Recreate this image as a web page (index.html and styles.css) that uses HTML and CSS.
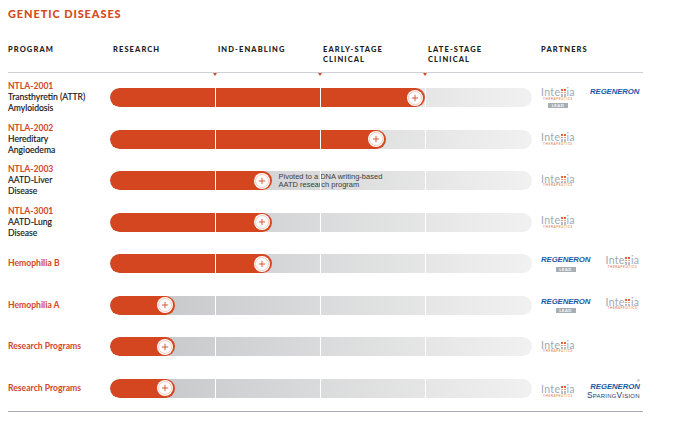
FILE: index.html
```html
<!DOCTYPE html>
<html lang="en">
<head>
<meta charset="utf-8">
<title>Genetic Diseases</title>
<link rel="stylesheet" href="styles.css">
</head>
<body>
<div class="page">
  <h1 class="title">GENETIC DISEASES</h1>
  <div class="head">
    <div class="hcell">PROGRAM</div>
    <div class="hcell stage">RESEARCH</div>
    <div class="hcell stage mark">IND-ENABLING</div>
    <div class="hcell stage mark">EARLY-STAGE<br>CLINICAL</div>
    <div class="hcell stage mark">LATE-STAGE<br>CLINICAL</div>
    <div class="hcell partners-h">PARTNERS</div>
  </div>
  <div class="rows">
    <div class="row">
      <div class="label"><span class="code">NTLA-2001</span><span>Transthyretin (ATTR)</span><span>Amyloidosis</span></div>
      <div class="bar"><div class="fill" style="width:314.5px"><svg class="plus" viewBox="0 0 16 16"><circle cx="8" cy="8" r="8" fill="#fff"/><circle cx="8" cy="8" r="6.5" fill="none" stroke="#e08a6c" stroke-width=".45"/><path d="M8 4.8v6.4M4.8 8h6.4" stroke="#d44a22" stroke-width=".9"/></svg></div></div>
      <div class="partners">
        <div class="group">
          <div class="intellia"><div class="int-word">Inte<span class="ll"><i></i><i></i></span>ia</div><div class="int-sub">THERAPEUTICS</div></div>
          <div class="lead">LEAD</div>
        </div>
        <div class="regen">REGENERON</div>
      </div>
    </div>
    <div class="row">
      <div class="label"><span class="code">NTLA-2002</span><span>Hereditary</span><span>Angioedema</span></div>
      <div class="bar"><div class="fill" style="width:275.5px"><svg class="plus" viewBox="0 0 16 16"><circle cx="8" cy="8" r="8" fill="#fff"/><circle cx="8" cy="8" r="6.5" fill="none" stroke="#e08a6c" stroke-width=".45"/><path d="M8 4.8v6.4M4.8 8h6.4" stroke="#d44a22" stroke-width=".9"/></svg></div></div>
      <div class="partners">
        <div class="intellia"><div class="int-word">Inte<span class="ll"><i></i><i></i></span>ia</div><div class="int-sub">THERAPEUTICS</div></div>
      </div>
    </div>
    <div class="row">
      <div class="label"><span class="code">NTLA-2003</span><span>AATD-Liver</span><span>Disease</span></div>
      <div class="bar"><div class="fill" style="width:161.5px"><svg class="plus" viewBox="0 0 16 16"><circle cx="8" cy="8" r="8" fill="#fff"/><circle cx="8" cy="8" r="6.5" fill="none" stroke="#e08a6c" stroke-width=".45"/><path d="M8 4.8v6.4M4.8 8h6.4" stroke="#d44a22" stroke-width=".9"/></svg></div><div class="note">Pivoted to a DNA writing-based<br>AATD research program</div></div>
      <div class="partners">
        <div class="intellia"><div class="int-word">Inte<span class="ll"><i></i><i></i></span>ia</div><div class="int-sub">THERAPEUTICS</div></div>
      </div>
    </div>
    <div class="row">
      <div class="label"><span class="code">NTLA-3001</span><span>AATD-Lung</span><span>Disease</span></div>
      <div class="bar"><div class="fill" style="width:161.5px"><svg class="plus" viewBox="0 0 16 16"><circle cx="8" cy="8" r="8" fill="#fff"/><circle cx="8" cy="8" r="6.5" fill="none" stroke="#e08a6c" stroke-width=".45"/><path d="M8 4.8v6.4M4.8 8h6.4" stroke="#d44a22" stroke-width=".9"/></svg></div></div>
      <div class="partners">
        <div class="intellia"><div class="int-word">Inte<span class="ll"><i></i><i></i></span>ia</div><div class="int-sub">THERAPEUTICS</div></div>
      </div>
    </div>
    <div class="row">
      <div class="label"><span class="code">Hemophilia B</span></div>
      <div class="bar"><div class="fill" style="width:161.5px"><svg class="plus" viewBox="0 0 16 16"><circle cx="8" cy="8" r="8" fill="#fff"/><circle cx="8" cy="8" r="6.5" fill="none" stroke="#e08a6c" stroke-width=".45"/><path d="M8 4.8v6.4M4.8 8h6.4" stroke="#d44a22" stroke-width=".9"/></svg></div></div>
      <div class="partners">
        <div class="group">
          <div class="regen">REGENERON</div>
          <div class="lead">LEAD</div>
        </div>
        <div class="intellia"><div class="int-word">Inte<span class="ll"><i></i><i></i></span>ia</div><div class="int-sub">THERAPEUTICS</div></div>
      </div>
    </div>
    <div class="row">
      <div class="label"><span class="code">Hemophilia A</span></div>
      <div class="bar"><div class="fill" style="width:64.5px"><svg class="plus" viewBox="0 0 16 16"><circle cx="8" cy="8" r="8" fill="#fff"/><circle cx="8" cy="8" r="6.5" fill="none" stroke="#e08a6c" stroke-width=".45"/><path d="M8 4.8v6.4M4.8 8h6.4" stroke="#d44a22" stroke-width=".9"/></svg></div></div>
      <div class="partners">
        <div class="group">
          <div class="regen">REGENERON</div>
          <div class="lead">LEAD</div>
        </div>
        <div class="intellia"><div class="int-word">Inte<span class="ll"><i></i><i></i></span>ia</div><div class="int-sub">THERAPEUTICS</div></div>
      </div>
    </div>
    <div class="row">
      <div class="label"><span class="code">Research Programs</span></div>
      <div class="bar"><div class="fill" style="width:64.5px"><svg class="plus" viewBox="0 0 16 16"><circle cx="8" cy="8" r="8" fill="#fff"/><circle cx="8" cy="8" r="6.5" fill="none" stroke="#e08a6c" stroke-width=".45"/><path d="M8 4.8v6.4M4.8 8h6.4" stroke="#d44a22" stroke-width=".9"/></svg></div></div>
      <div class="partners">
        <div class="intellia"><div class="int-word">Inte<span class="ll"><i></i><i></i></span>ia</div><div class="int-sub">THERAPEUTICS</div></div>
      </div>
    </div>
    <div class="row">
      <div class="label"><span class="code">Research Programs</span></div>
      <div class="bar"><div class="fill" style="width:64.5px"><svg class="plus" viewBox="0 0 16 16"><circle cx="8" cy="8" r="8" fill="#fff"/><circle cx="8" cy="8" r="6.5" fill="none" stroke="#e08a6c" stroke-width=".45"/><path d="M8 4.8v6.4M4.8 8h6.4" stroke="#d44a22" stroke-width=".9"/></svg></div></div>
      <div class="partners low">
        <div class="intellia"><div class="int-word">Inte<span class="ll"><i></i><i></i></span>ia</div><div class="int-sub">THERAPEUTICS</div></div>
        <div class="group right">
          <div class="regen">REGENERON<span class="reg">®</span></div>
          <div class="sparing">SparingVision</div>
        </div>
      </div>
    </div>
  </div>
</div>
</body>
</html>
```

FILE: styles.css
```css
* { box-sizing: border-box; }
body {
  margin: 0;
  background: #fff;
  font-family: Lato, "Open Sans", sans-serif;
  color: #231f20;
}
.page {
  width: 635px;
  margin-left: 8px;
  padding-top: 7px;
}
.title {
  margin: 0;
  height: 14px;
  font-size: 11px;
  line-height: 14px;
  font-weight: 900;
  letter-spacing: 0.9px;
  color: #d44a22;
}
.head {
  display: grid;
  grid-template-columns: 102px repeat(4, 105px) 1fr;
  margin-top: 23px;
  height: 29.3px;
  padding-top: 1px;
  border-bottom: 1.3px solid #cdd0d4;
}
.hcell {
  position: relative;
  font-size: 7.5px;
  line-height: 10px;
  font-weight: 900;
  letter-spacing: 1.1px;
  color: #1b1d21;
}
.stage { padding-left: 3px; }
.partners-h { padding-left: 11px; }
.mark::after {
  content: "";
  position: absolute;
  left: -2.5px;
  top: calc(100% + 0.3px);
  border-left: 2.5px solid transparent;
  border-right: 2.5px solid transparent;
  border-top: 3.5px solid #d44a22;
}
.rows {
  padding: 3.5px 0 2.5px;
  border-bottom: 1px solid #a9acb0;
}
.row {
  display: grid;
  grid-template-columns: 102px 422px 1fr;
  align-items: center;
  height: 41.5px;
}
.label {
  display: flex;
  flex-direction: column;
  font-size: 8.6px;
  line-height: 11px;
  color: #141213;
  -webkit-text-stroke: 0.15px #141213;
}
.code {
  color: #d3462a;
  font-weight: 700;
  -webkit-text-stroke: 0;
}
.bar {
  position: relative;
  display: flex;
  height: 19px;
  border-radius: 9.5px;
  overflow: hidden;
  background: linear-gradient(to right, #c3c4c6, #f1f1f1);
}
.bar::after {
  content: "";
  position: absolute;
  inset: 0;
  pointer-events: none;
  background:
    linear-gradient(#fff, #fff) 105px 0 / 1px 100% no-repeat,
    linear-gradient(#fff, #fff) 210px 0 / 1px 100% no-repeat,
    linear-gradient(#fff, #fff) 315px 0 / 1px 100% no-repeat;
}
.fill {
  display: flex;
  align-items: center;
  justify-content: flex-end;
  flex: none;
  height: 100%;
  padding-right: 1.5px;
  border-radius: 9.5px;
  background: #d4461f;
}
.plus {
  display: block;
  width: 16px;
  height: 16px;
}
.note {
  align-self: center;
  margin-left: 7px;
  font-family: "Liberation Sans", Arial, sans-serif;
  font-size: 7.5px;
  line-height: 7.6px;
  color: #3b3b3b;
}
.partners {
  display: flex;
  align-items: flex-start;
  gap: 15px;
  padding-left: 9px;
}
.partners.low {
  align-items: center;
  gap: 12px;
  margin-top: 6px;
}
.group {
  display: flex;
  flex-direction: column;
  align-items: center;
}
.group.right { align-items: flex-end; }
.intellia {
  display: flex;
  flex-direction: column;
  align-items: center;
  width: 34px;
}
.int-word {
  font-size: 10.5px;
  line-height: 10px;
  letter-spacing: 0.3px;
  color: #a0a9b1;
  white-space: nowrap;
}
.ll {
  display: inline-flex;
  gap: 1.2px;
  margin: 0 0.8px 0 0.3px;
  vertical-align: -0.5px;
}
.ll i {
  display: block;
  width: 2px;
  height: 7.6px;
  background: linear-gradient(to bottom,
    #e8602f 0 2px, transparent 2px 2.8px,
    #ec9a7a 2.8px 4.4px, transparent 4.4px 5.2px,
    #b7bfc6 5.2px 100%);
}
.int-sub {
  margin-top: 0.5px;
  font-size: 3.1px;
  line-height: 3px;
  letter-spacing: 0.62px;
  color: #e0693d;
  white-space: nowrap;
}
.lead {
  margin-top: 2.5px;
  width: 20px;
  height: 5px;
  background: #a7aeb4;
  color: #fff;
  font-size: 4px;
  line-height: 5px;
  font-weight: 700;
  letter-spacing: 0.6px;
  text-align: center;
}
.regen {
  position: relative;
  font-family: "Liberation Sans", Arial, sans-serif;
  font-size: 7.8px;
  line-height: 9px;
  font-weight: 700;
  font-style: italic;
  letter-spacing: -0.1px;
  color: #1a5aa6;
  white-space: nowrap;
}
.reg {
  position: absolute;
  right: 0;
  top: -6px;
  font-size: 4px;
  font-style: normal;
  font-weight: 400;
  color: #555;
}
.sparing {
  font-family: "Liberation Sans", Arial, sans-serif;
  font-variant: small-caps;
  font-size: 8.4px;
  line-height: 9px;
  letter-spacing: 0.2px;
  color: #1f3b70;
  white-space: nowrap;
}
```
